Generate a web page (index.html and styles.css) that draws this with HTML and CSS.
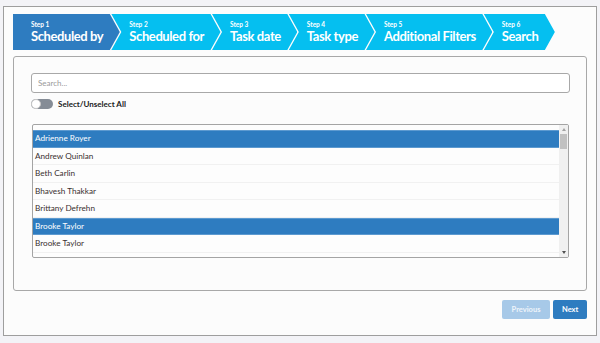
FILE: index.html
```html
<!DOCTYPE html>
<html>
<head>
<meta charset="utf-8">
<link rel="stylesheet" href="styles.css">
</head>
<body>
<div class="page">
  <div class="card">
    <div class="steps">
      <div class="step step-first active"><span class="step-num">Step 1</span><span class="step-title">Scheduled by</span></div>
      <div class="step"><span class="step-num">Step 2</span><span class="step-title">Scheduled for</span></div>
      <div class="step"><span class="step-num">Step 3</span><span class="step-title">Task date</span></div>
      <div class="step"><span class="step-num">Step 4</span><span class="step-title">Task type</span></div>
      <div class="step"><span class="step-num">Step 5</span><span class="step-title">Additional Filters</span></div>
      <div class="step"><span class="step-num">Step 6</span><span class="step-title">Search</span></div>
    </div>
    <div class="panel">
      <input class="search" type="text" placeholder="Search...">
      <div class="toggle-row">
        <span class="toggle"><span class="knob"></span></span>
        <span class="toggle-label">Select/Unselect All</span>
      </div>
      <div class="listbox">
        <div class="rows">
          <div class="row selected">Adrienne Royer</div>
          <div class="row">Andrew Quinlan</div>
          <div class="row">Beth Carlin</div>
          <div class="row">Bhavesh Thakkar</div>
          <div class="row">Brittany Defrehn</div>
          <div class="row selected">Brooke Taylor</div>
          <div class="row">Brooke Taylor</div>
        </div>
        <div class="scrollbar">
          <span class="arrow-up"></span>
          <span class="thumb"></span>
          <span class="track"></span>
          <span class="arrow-down"></span>
        </div>
      </div>
    </div>
    <div class="actions">
      <button class="btn btn-prev">Previous</button>
      <button class="btn btn-next">Next</button>
    </div>
  </div>
</div>
</body>
</html>
```
FILE: styles.css
```css
* { box-sizing: border-box; }
html, body { margin: 0; padding: 0; }
body {
  background: #f3f3f7;
  font-family: Lato, "Open Sans", Arial, sans-serif;
  width: 600px;
  height: 343px;
  overflow: hidden;
}
.page {
  padding: 6px 3px 0 3px;
}
.card {
  background: #fcfcfc;
  border: 1px solid #9e9e9e;
  height: 330px;
  padding: 7px 9px 16px 9px;
  display: flex;
  flex-direction: column;
}
.steps {
  display: flex;
  height: 36px;
}
.step {
  height: 36px;
  background: #05bff0;
  color: #fff;
  display: flex;
  flex-direction: column;
  padding: 7px 16.5px 0 18px;
  margin-left: -8.5px;
  clip-path: polygon(0 0, calc(100% - 10px) 0, 100% 50%, calc(100% - 10px) 100%, 0 100%, 10px 50%);
  white-space: nowrap;
}
.step-first {
  margin-left: 0;
  clip-path: polygon(0 0, calc(100% - 10px) 0, 100% 50%, calc(100% - 10px) 100%, 0 100%);
}
.step.active { background: #2e7cc0; }
.step-num {
  font-size: 6.5px;
  line-height: 7px;
  font-weight: 700;
}
.step-title {
  font-size: 13px;
  line-height: 16px;
  font-weight: 700;
  letter-spacing: -0.4px;
}
.panel {
  margin-top: 6px;
  border: 1px solid #a8a8a8;
  border-radius: 3px;
  padding: 16px 16px 32px 17px;
  display: flex;
  flex-direction: column;
}
.search {
  height: 20px;
  border: 1px solid #a8a8a8;
  border-radius: 3px;
  background: #fff;
  padding: 0 6px;
  font-family: Lato, sans-serif;
  font-size: 8px;
  color: #333;
  outline: none;
}
.search::placeholder { color: #9a9a9a; }
.toggle-row {
  margin-top: 6px;
  height: 10px;
  display: flex;
  align-items: center;
  gap: 5px;
}
.toggle {
  width: 22px;
  height: 10px;
  border-radius: 5px;
  background: #858c96;
  position: relative;
  display: block;
}
.knob {
  position: absolute;
  left: 0;
  top: 0;
  width: 10px;
  height: 10px;
  border-radius: 50%;
  background: #fff;
  border: 1px solid #c8c8c8;
}
.toggle-label {
  font-size: 8px;
  font-weight: 700;
  color: #222;
}
.listbox {
  margin: 15px 1px 0 1px;
  height: 134px;
  border: 1px solid #a4a4a4;
  border-radius: 2px;
  background: #fdfdfd;
  display: flex;
  overflow: hidden;
}
.rows {
  flex: 1;
  padding-top: 5px;
  overflow: hidden;
}
.row {
  height: 17.5px;
  line-height: 17.5px;
  padding-left: 2px;
  font-size: 8.2px;
  color: #3a3030;
  border-bottom: 1px solid #f1f1f1;
  white-space: nowrap;
}
.row.selected {
  background: #2e7cc0;
  color: #fff;
  border-top: 1px solid #5d9ad0;
  border-bottom: 1px solid #5d9ad0;
  line-height: 15.5px;
}
.scrollbar {
  width: 9px;
  background: #f0f0f0;
  display: flex;
  flex-direction: column;
  align-items: center;
}
.arrow-up {
  margin-top: 3px;
  width: 0;
  height: 0;
  border-left: 2.5px solid transparent;
  border-right: 2.5px solid transparent;
  border-bottom: 3px solid #a3a3a3;
}
.thumb {
  margin-top: 3px;
  width: 7px;
  height: 15px;
  background: #c1c1c1;
}
.track { flex: 1; }
.arrow-down {
  margin-bottom: 3px;
  width: 0;
  height: 0;
  border-left: 2.5px solid transparent;
  border-right: 2.5px solid transparent;
  border-top: 3px solid #505050;
}
.actions {
  margin-top: 9px;
  display: flex;
  justify-content: flex-end;
  gap: 3px;
}
.btn {
  height: 19px;
  border: none;
  border-radius: 2px;
  font-family: Lato, sans-serif;
  font-size: 7.5px;
  font-weight: 700;
  color: #fff;
  padding: 0 9px;
}
.btn-prev { background: #a7c9e8; width: 48px; color: #eef4fa; }
.btn-next { background: #2e7cc0; width: 34px; }
```
